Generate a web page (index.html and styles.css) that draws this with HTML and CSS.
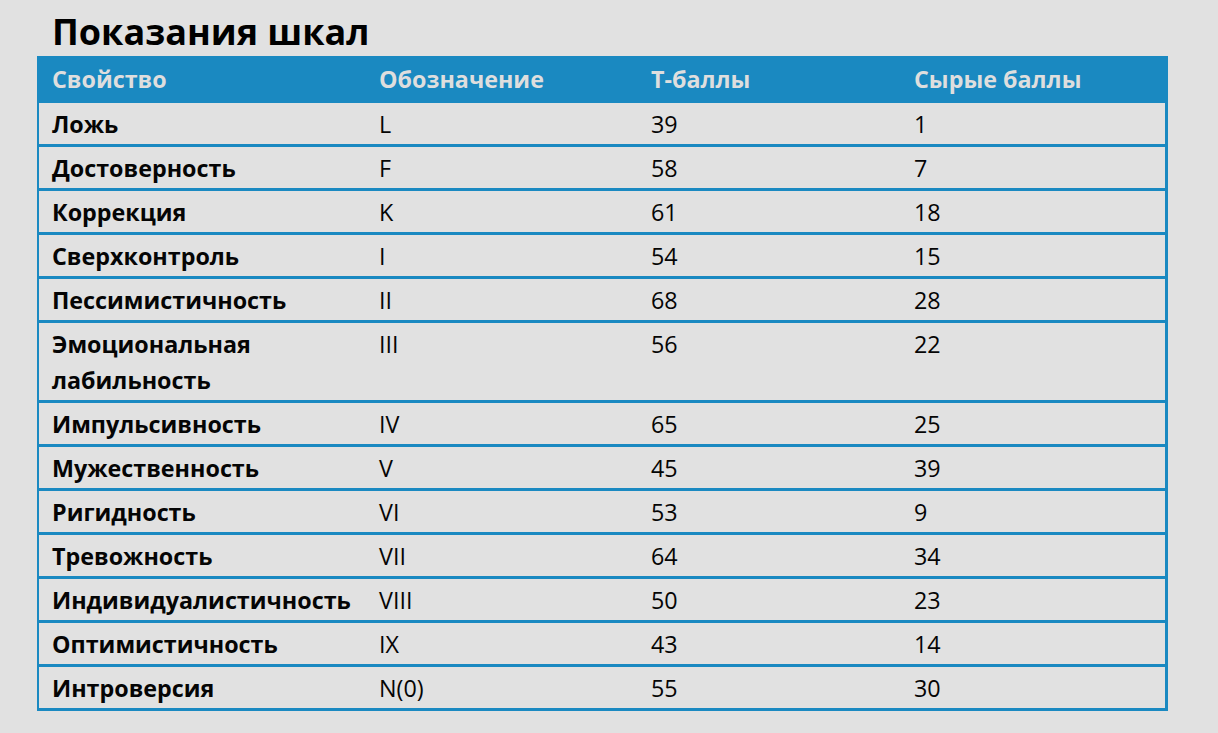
FILE: index.html
```html
<!DOCTYPE html>
<html lang="ru">
<head>
<meta charset="utf-8">
<link rel="stylesheet" href="styles.css">
</head>
<body>
<div class="page">
  <h1 class="title">Показания шкал</h1>
  <table class="scales">
    <thead>
      <tr><th class="c1">Свойство</th><th class="c2">Обозначение</th><th class="c3">Т-баллы</th><th class="c4">Сырые баллы</th></tr>
    </thead>
    <tbody>
      <tr><td class="name">Ложь</td><td>L</td><td>39</td><td>1</td></tr>
      <tr><td class="name">Достоверность</td><td>F</td><td>58</td><td>7</td></tr>
      <tr><td class="name">Коррекция</td><td>K</td><td>61</td><td>18</td></tr>
      <tr><td class="name">Сверхконтроль</td><td>I</td><td>54</td><td>15</td></tr>
      <tr><td class="name">Пессимистичность</td><td>II</td><td>68</td><td>28</td></tr>
      <tr><td class="name">Эмоциональная<br>лабильность</td><td>III</td><td>56</td><td>22</td></tr>
      <tr><td class="name">Импульсивность</td><td>IV</td><td>65</td><td>25</td></tr>
      <tr><td class="name">Мужественность</td><td>V</td><td>45</td><td>39</td></tr>
      <tr><td class="name">Ригидность</td><td>VI</td><td>53</td><td>9</td></tr>
      <tr><td class="name">Тревожность</td><td>VII</td><td>64</td><td>34</td></tr>
      <tr><td class="name">Индивидуалистичность</td><td>VIII</td><td>50</td><td>23</td></tr>
      <tr><td class="name">Оптимистичность</td><td>IX</td><td>43</td><td>14</td></tr>
      <tr><td class="name">Интроверсия</td><td>N(0)</td><td>55</td><td>30</td></tr>
    </tbody>
  </table>
</div>
</body>
</html>
```
FILE: styles.css
```css
html, body {
  margin: 0;
  padding: 0;
  background: #e1e1e1;
}
.page {
  padding: 14px 0 0 37px;
  font-family: "Open Sans", "DejaVu Sans", sans-serif;
  color: #000;
}
.title {
  margin: 0 0 7px 15px;
  font-size: 36px;
  line-height: 35px;
  font-weight: 700;
}
.scales {
  width: 1131px;
  border-collapse: collapse;
  border: 3px solid #1a89c1;
  border-left-width: 2px;
  table-layout: fixed;
}
.scales th,
.scales td {
  text-align: left;
  vertical-align: top;
  padding: 3px 0 2px 13px;
  font-size: 23.3px;
  line-height: 36px;
  color: #050505;
}
.scales thead th {
  background: #1a89c1;
  color: #dedede;
  font-weight: 700;
  padding-top: 2px;
  padding-bottom: 6px;
}
.scales .c1 { width: 314px; }
.scales .c2 { width: 259px; }
.scales .c3 { width: 250px; }
.scales tbody tr {
  border-top: 3px solid #1a89c1;
}
.scales tbody tr:first-child {
  border-top: 0;
}
.scales td.name {
  font-weight: 700;
}
```
